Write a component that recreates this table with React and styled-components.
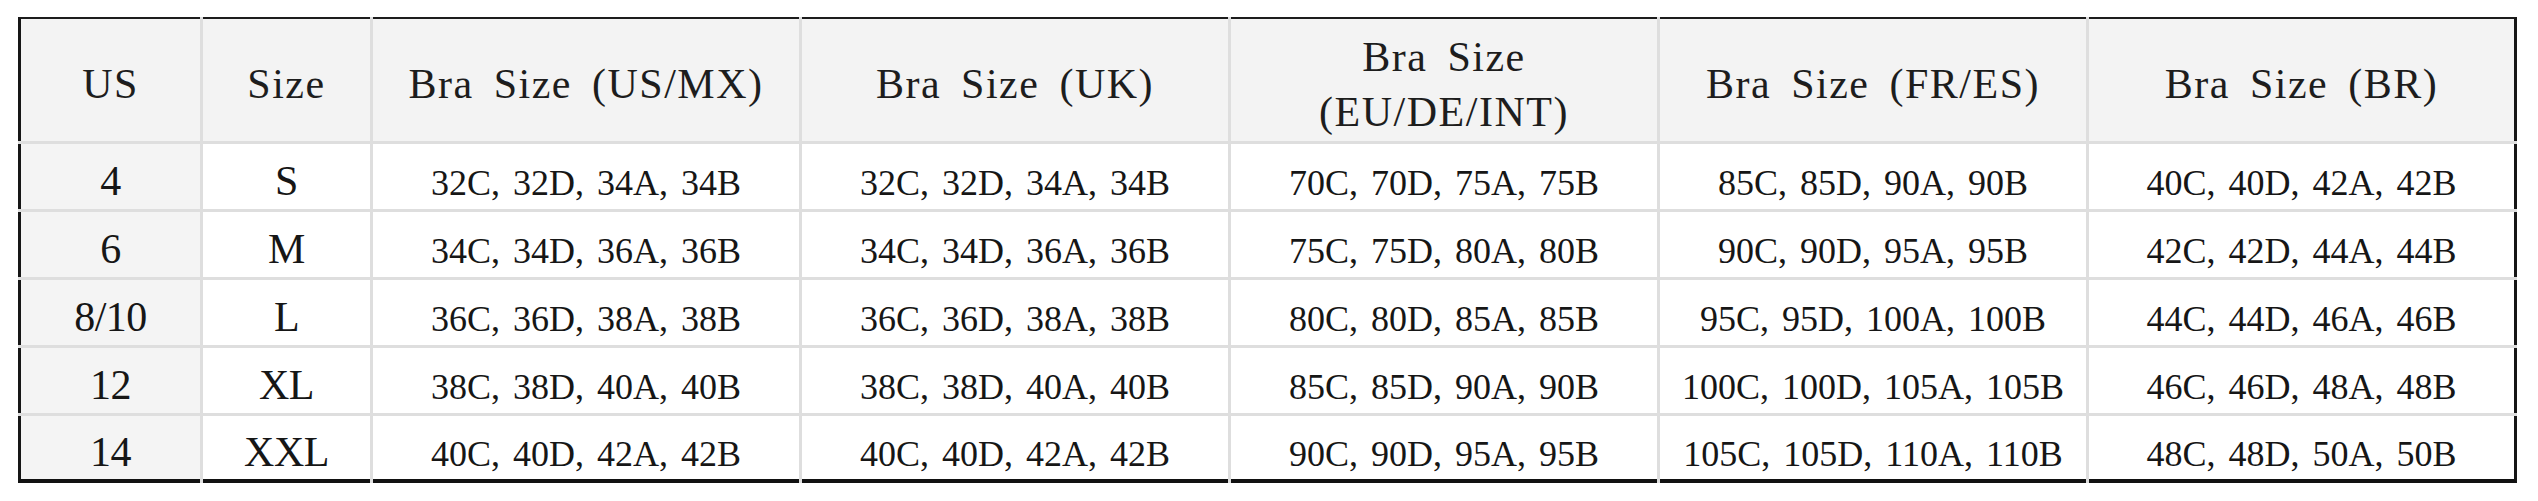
import React from "react";
import styled, { createGlobalStyle, css } from "styled-components";

const Global = createGlobalStyle`
  html, body { margin: 0; padding: 0; background: #ffffff; }
  body { font-family: "Liberation Serif", "Times New Roman", serif; color: #1b1b1b; }
`;

const Page = styled.div`
  width: 2538px;
  height: 501px;
  box-sizing: border-box;
  padding: 17px 21px 18px 18px;
  background: #ffffff;
`;

const Grid = styled.div`
  display: grid;
  width: 2499px;
  grid-template-columns: 182px 167px 426px 426px 426px 426px 428px;
  grid-template-rows: 124px 65px 65px 65px 65px 67px;
  gap: 3px;
  background: #dedede;
`;

const edges = css`
  ${(p) => p.$left && "border-left: 3px solid #161616;"}
  ${(p) => p.$right && "border-right: 3px solid #161616;"}
`;

const HeadCell = styled.div`
  box-sizing: border-box;
  display: flex;
  align-items: center;
  justify-content: center;
  text-align: center;
  background: #f3f3f3;
  border-top: 2px solid #1c1c1c;
  ${edges}
  padding-top: ${(p) => (p.$twoLine ? "10px" : "8px")};
  font-size: 42px;
  line-height: 55px;
  letter-spacing: 1.5px;
  word-spacing: 8px;
  color: #1d1d1d;
`;

const BodyCell = styled.div`
  box-sizing: border-box;
  display: flex;
  align-items: center;
  justify-content: center;
  text-align: center;
  white-space: nowrap;
  background: ${(p) => (p.$shade ? "#f4f4f4" : "#ffffff")};
  ${edges}
  ${(p) => p.$last && "border-bottom: 4px solid #111111;"}
  padding-top: ${(p) => (p.$big ? "8px" : "12px")};
  font-size: ${(p) => (p.$big ? "42px" : "36px")};
  letter-spacing: ${(p) => (p.$big ? "-0.5px" : "0")};
  word-spacing: ${(p) => (p.$big ? "0" : "4px")};
  line-height: 1;
  color: #161616;
`;

const headers = [
  ["US"],
  ["Size"],
  ["Bra Size (US/MX)"],
  ["Bra Size (UK)"],
  ["Bra Size", "(EU/DE/INT)"],
  ["Bra Size (FR/ES)"],
  ["Bra Size (BR)"],
];

const rows = [
  ["4", "S", "32C, 32D, 34A, 34B", "32C, 32D, 34A, 34B", "70C, 70D, 75A, 75B", "85C, 85D, 90A, 90B", "40C, 40D, 42A, 42B"],
  ["6", "M", "34C, 34D, 36A, 36B", "34C, 34D, 36A, 36B", "75C, 75D, 80A, 80B", "90C, 90D, 95A, 95B", "42C, 42D, 44A, 44B"],
  ["8/10", "L", "36C, 36D, 38A, 38B", "36C, 36D, 38A, 38B", "80C, 80D, 85A, 85B", "95C, 95D, 100A, 100B", "44C, 44D, 46A, 46B"],
  ["12", "XL", "38C, 38D, 40A, 40B", "38C, 38D, 40A, 40B", "85C, 85D, 90A, 90B", "100C, 100D, 105A, 105B", "46C, 46D, 48A, 48B"],
  ["14", "XXL", "40C, 40D, 42A, 42B", "40C, 40D, 42A, 42B", "90C, 90D, 95A, 95B", "105C, 105D, 110A, 110B", "48C, 48D, 50A, 50B"],
];

export default function App() {
  const lastCol = headers.length - 1;
  return (
    <Page>
      <Global />
      <Grid>
        {headers.map((lines, i) => (
          <HeadCell key={"h" + i} $left={i === 0} $right={i === lastCol} $twoLine={lines.length > 1}>
            <span>
              {lines.map((l, j) => (
                <React.Fragment key={j}>
                  {j > 0 && <br />}
                  {l}
                </React.Fragment>
              ))}
            </span>
          </HeadCell>
        ))}
        {rows.map((row, r) =>
          row.map((val, c) => (
            <BodyCell
              key={r + "-" + c}
              $shade={c === 0}
              $big={c < 2}
              $left={c === 0}
              $right={c === lastCol}
              $last={r === rows.length - 1}
            >
              {val}
            </BodyCell>
          ))
        )}
      </Grid>
    </Page>
  );
}
